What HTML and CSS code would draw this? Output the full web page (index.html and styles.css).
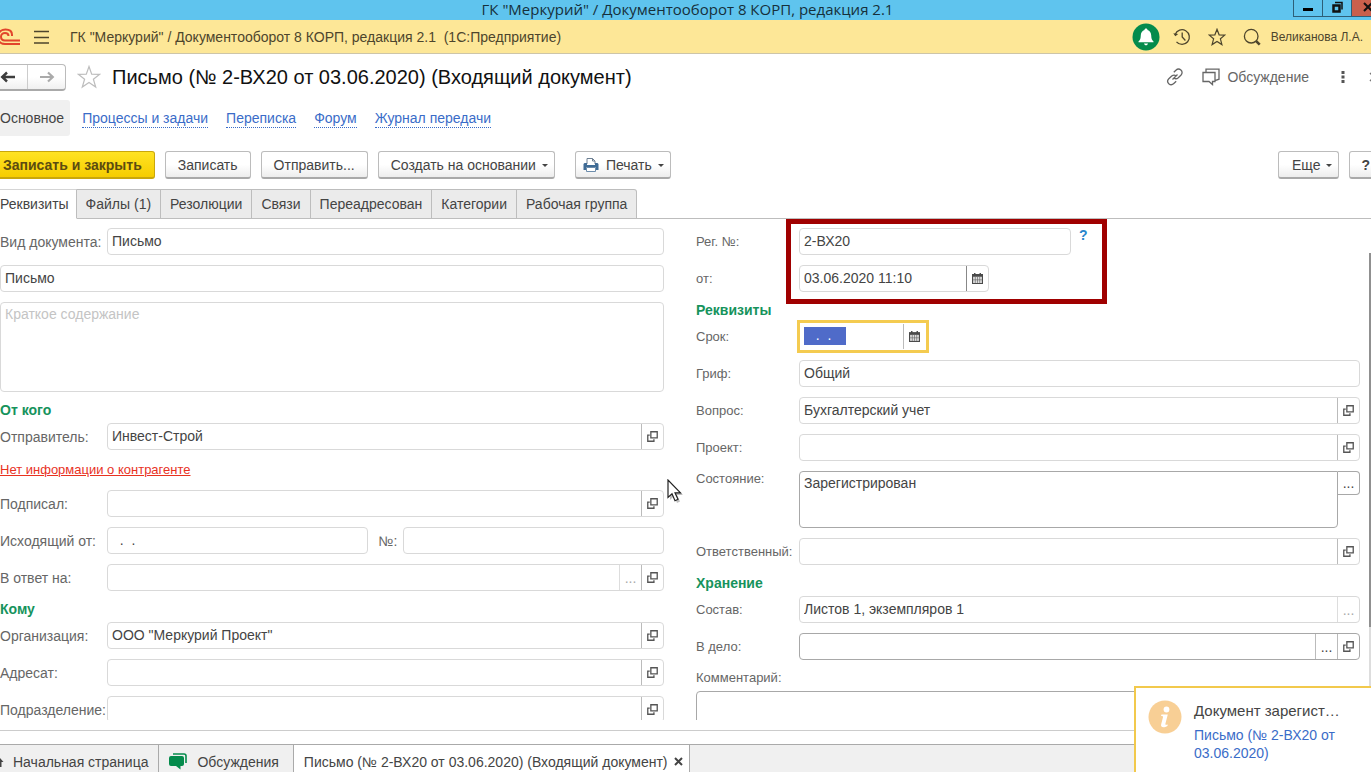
FILE: index.html
```html
<!DOCTYPE html>
<html lang="ru">
<head>
<meta charset="utf-8">
<title>ГК "Меркурий" / Документооборот 8 КОРП, редакция 2.1</title>
<link rel="stylesheet" href="styles.css">
</head>
<body>
<svg class="defs" aria-hidden="true">
  <symbol id="open" viewBox="0 0 10 10"><path d="M3.5.7h5.8v5.6H3.5zM2.5 3.7H.7v5.6h5.6V7.5" fill="none" stroke="#555" stroke-width="1.2"/></symbol>
  <symbol id="cal" viewBox="0 0 10 10"><path d="M0 1h10v9H0z" fill="#4a4a4a"/><path d="M1 3.500h8v5.500H1z" fill="#ddd"/><path d="M3 3.500v5.500M5 3.500v5.500M7 3.500v5.500M1 6.200h8" stroke="#666" stroke-width=".6"/><path d="M2.500 0v2M7.500 0v2" stroke="#4a4a4a" stroke-width="1.300"/></symbol>
</svg>

<header class="titlebar">
  <span class="titlebar-text">ГК "Меркурий" / Документооборот 8 КОРП, редакция 2.1</span>
  <div class="window-buttons">
    <button class="win" aria-label="Свернуть"><svg width="12" height="14"><path d="M1 7h10v3H1z"/></svg></button>
    <button class="win" aria-label="Развернуть"><svg width="12" height="14" fill="none" stroke="#111"><path d="M2.500 4.500h6v6h-6z" stroke-width="2.500"/><path d="M4 1.500h7v7" stroke-width="1.500"/></svg></button>
    <button class="win win-close" aria-label="Закрыть окно"><svg width="12" height="14"><path d="M4 2l8 8M12 2l-8 8" stroke="#111" stroke-width="2"/></svg></button>
  </div>
</header>

<div class="appbar">
  <svg class="logo" width="21" height="18" viewBox="0 0 21 18" fill="none" stroke="#e2452c" stroke-width="2"><path d="M12 8V6.800C12 3.500 9.500 1.500 5.500 1.500 1 1.500-2 4.500-2 9s3 7 7 7H20"/><path d="M8.500 8c0-2-1.300-3-3.500-3S1 6.500 1 8.800s1.800 3.700 4 3.700H20"/></svg>
  <button class="plain" aria-label="Меню"><svg width="16" height="14" stroke="#4d452c" stroke-width="1.400"><path d="M0 1.500h15M0 7.500h15M0 13h15"/></svg></button>
  <span class="app-name">ГК "Меркурий" / Документооборот 8 КОРП, редакция 2.1&nbsp; (1С:Предприятие)</span>
  <div class="app-tools">
    <button class="plain" aria-label="Уведомления"><svg width="28" height="28" viewBox="0 0 28 28"><circle cx="14" cy="14" r="13.500" fill="#048b4c"/><path d="M14 5.500c.9 0 1.500.6 1.500 1.400 2.300.7 3.600 2.600 3.700 5.300.1 3.200.5 4.600 2.300 6.300v.8h-15v-.8c1.800-1.700 2.200-3.100 2.300-6.300.1-2.700 1.400-4.600 3.700-5.300 0-.8.6-1.400 1.500-1.400zM12 20.500h4c-.3 1.200-1 1.800-2 1.800s-1.700-.6-2-1.800z" fill="#fff"/></svg></button>
    <button class="plain" aria-label="История"><svg width="18" height="18" viewBox="0 0 18 18" fill="none" stroke="#4d452c" stroke-width="1.300"><path d="M2.200 6.500A7.300 7.300 0 1 1 3.500 13.800M9.200 4.500V9l3.200 3.500"/><path d="M.3 5.200l2 3.100 2.900-2.400z" fill="#4d452c" stroke="none"/></svg></button>
    <button class="plain" aria-label="Избранное"><svg width="18" height="18" viewBox="0 0 18 18" fill="none" stroke="#4d452c" stroke-width="1.200"><path d="M9 1.300l2.100 5.500 5.700.3-4.400 3.700 1.500 5.800L9 13.400l-4.900 3.200 1.500-5.800L1.200 7.100l5.700-.3z"/></svg></button>
    <button class="plain" aria-label="Поиск"><svg width="18" height="18" viewBox="0 0 18 18" fill="none" stroke="#4d452c" stroke-width="1.300"><circle cx="8.200" cy="8.200" r="6.800"/><path d="M13.200 13.200l3.500 3.500" stroke-width="2.600"/></svg></button>
    <span class="user">Великанова Л.А.</span>
  </div>
</div>

<div class="docbar">
  <div class="history">
    <button aria-label="Назад"><svg width="16" height="12"><path d="M15 6H3M7 1.500L2.200 6 7 10.500" fill="none" stroke="#3d3d3d" stroke-width="2.400"/></svg></button>
    <button aria-label="Вперёд"><svg width="16" height="12"><path d="M1 6h12M9 1.500L13.800 6 9 10.500" fill="none" stroke="#aaa" stroke-width="2.200"/></svg></button>
  </div>
  <button class="plain" aria-label="В избранное"><svg width="24" height="24" viewBox="0 0 24 24" fill="none" stroke="#bdbdbd" stroke-width="1.200"><path d="M12 1.500l2.700 7.600 8 .2-6.300 4.900 2.300 7.800L12 17.500 5.300 22l2.300-7.800L1.300 9.300l8-.2z"/></svg></button>
  <h1>Письмо (№ 2-ВХ20 от 03.06.2020) (Входящий документ)</h1>
  <div class="doc-tools">
    <button class="plain" aria-label="Ссылка"><svg width="18" height="18" viewBox="0 0 18 18" fill="none" stroke="#666" stroke-width="1.300"><path d="M7.800 4.300l2.100-2.100c1.500-1.400 3.500-1.500 5-.2 1.600 1.400 1.500 3.600.2 5l-2.800 2.700c-1.400 1.200-3 1.300-4.400.3M10.200 13.200l-2.400 2.300c-1.500 1.500-3.400 1.600-5 .2-1.500-1.500-1.300-3.600 0-4.900l2.900-2.700c1.400-1.200 3-1.300 4.400-.3M6.500 11.500l5-5"/></svg></button>
    <button class="plain discuss"><svg width="18" height="18" viewBox="0 0 18 18" fill="none" stroke="#666" stroke-width="1.300"><path d="M1 4.500h12v9h-2.500v3l-3.500-3H1zM4 4.500V1.200h13v10l-4 1.500"/></svg>Обсуждение</button>
    <button class="plain" aria-label="Действия"><svg width="4" height="14" fill="#555"><path d="M.5 1h3v3h-3zM.5 5.500h3v3h-3zM.5 10h3v3h-3z"/></svg></button>
    <button class="plain close-doc" aria-label="Закрыть"><svg width="10" height="10"><path d="M1 1l8 8M9 1L1 9" stroke="#777" stroke-width="1.500"/></svg></button>
  </div>
</div>

<nav class="sections">
  <span class="current">Основное</span>
  <a href="#">Процессы и задачи</a>
  <a href="#">Переписка</a>
  <a href="#">Форум</a>
  <a href="#">Журнал передачи</a>
</nav>

<div class="commands">
  <button class="btn primary">Записать и закрыть</button>
  <button class="btn">Записать</button>
  <button class="btn">Отправить...</button>
  <button class="btn">Создать на основании<i class="caret"></i></button>
  <button class="btn print"><svg width="16" height="16" viewBox="0 0 16 16"><path d="M4 7V1.500h5.500L12 4v3" fill="#fff" stroke="#6c7f92"/><path d="M9.500 1.500V4H12" fill="none" stroke="#6c7f92"/><path d="M1.500 6H4v2h8V6h2.500l1 1v6H13v-2.500H3V13H.5V7z" fill="#3f6b95"/><path d="M3.500 10.500h9v4h-9z" fill="#fff" stroke="#6c8cab"/></svg>Печать<i class="caret"></i></button>
  <button class="btn more">Еще<i class="caret"></i></button>
  <button class="btn help">?</button>
</div>

<div class="tabs" role="tablist">
  <button role="tab" class="active" aria-selected="true">Реквизиты</button>
  <button role="tab">Файлы (1)</button>
  <button role="tab">Резолюции</button>
  <button role="tab">Связи</button>
  <button role="tab">Переадресован</button>
  <button role="tab">Категории</button>
  <button role="tab">Рабочая группа</button>
</div>

<main class="form">
  <div class="column left">
    <div class="group">
      <div class="row"><label for="kind">Вид документа:</label><div class="field"><input id="kind" value="Письмо"></div></div>
      <div class="field"><input aria-label="Заголовок" value="Письмо"></div>
      <textarea class="summary" aria-label="Краткое содержание" placeholder="Краткое содержание"></textarea>
    </div>
    <h2>От кого</h2>
    <div class="group">
      <div class="row"><label for="sender">Отправитель:</label><div class="field"><input id="sender" value="Инвест-Строй"><button aria-label="Открыть"><svg><use href="#open"/></svg></button></div></div>
      <a class="warning" href="#">Нет информации о контрагенте</a>
      <div class="row"><label for="signer">Подписал:</label><div class="field"><input id="signer"><button aria-label="Открыть"><svg><use href="#open"/></svg></button></div></div>
      <div class="row"><label for="outdate">Исходящий от:</label><div class="pair"><div class="field"><input id="outdate" value="&nbsp; .&nbsp; ."></div><label for="outnum">№:</label><div class="field"><input id="outnum"></div></div></div>
      <div class="row"><label for="reply">В ответ на:</label><div class="field"><input id="reply"><button class="light" aria-label="Выбрать">...</button><button aria-label="Открыть"><svg><use href="#open"/></svg></button></div></div>
    </div>
    <h2>Кому</h2>
    <div class="group">
      <div class="row"><label for="org">Организация:</label><div class="field"><input id="org" value='ООО "Меркурий Проект"'><button aria-label="Открыть"><svg><use href="#open"/></svg></button></div></div>
      <div class="row"><label for="addr">Адресат:</label><div class="field"><input id="addr"><button aria-label="Открыть"><svg><use href="#open"/></svg></button></div></div>
      <div class="row"><label for="dept">Подразделение:</label><div class="field"><input id="dept"><button aria-label="Открыть"><svg><use href="#open"/></svg></button></div></div>
    </div>
  </div>

  <div class="column right">
    <div class="group registration">
      <div class="row"><label for="regnum">Рег. №:</label><div class="with-hint"><div class="field regnum"><input id="regnum" value="2-ВХ20"></div><a class="hint" href="#">?</a></div></div>
      <div class="row"><label for="regdate">от:</label><div class="field regdate"><input id="regdate" value="03.06.2020 11:10"><button class="strong" aria-label="Календарь"><svg><use href="#cal"/></svg></button></div></div>
      <div class="highlight"></div>
    </div>
    <h2>Реквизиты</h2>
    <div class="group">
      <div class="row"><label for="due">Срок:</label><div class="field due"><input id="due" value="&nbsp; .&nbsp; ."><button aria-label="Календарь"><svg><use href="#cal"/></svg></button></div></div>
      <div class="row"><label for="stamp">Гриф:</label><div class="field"><input id="stamp" value="Общий"></div></div>
      <div class="row"><label for="topic">Вопрос:</label><div class="field"><input id="topic" value="Бухгалтерский учет"><button aria-label="Открыть"><svg><use href="#open"/></svg></button></div></div>
      <div class="row"><label for="project">Проект:</label><div class="field"><input id="project"><button aria-label="Открыть"><svg><use href="#open"/></svg></button></div></div>
      <div class="row state"><label for="state">Состояние:</label><div class="state-box"><textarea id="state">Зарегистрирован</textarea><button aria-label="Выбрать">...</button></div></div>
      <div class="row"><label for="resp">Ответственный:</label><div class="field"><input id="resp"><button aria-label="Открыть"><svg><use href="#open"/></svg></button></div></div>
    </div>
    <h2>Хранение</h2>
    <div class="group">
      <div class="row"><label for="content">Состав:</label><div class="field"><input id="content" value="Листов 1, экземпляров 1"><button class="light" aria-label="Выбрать">...</button></div></div>
      <div class="row"><label for="file">В дело:</label><div class="field dark"><input id="file"><button aria-label="Выбрать">...</button><button aria-label="Открыть"><svg><use href="#open"/></svg></button></div></div>
    </div>
    <label class="comment-label" for="comment">Комментарий:</label>
    <textarea id="comment" class="comment"></textarea>
  </div>
  <div class="scrollbar"><div class="thumb"></div></div>
</main>

<footer class="taskbar">
  <button class="task home"><svg width="5" height="12"><path d="M-3 6L0 2l3.500 4H1.500v5H-1" fill="#444"/></svg>Начальная страница</button>
  <button class="task talks"><svg width="18" height="17" viewBox="0 0 18 17"><path d="M4 1h11q2 0 2 2v7" fill="none" stroke="#048b4c" stroke-width="1.600"/><path d="M2 3h11q2 0 2 2v6q0 2-2 2h-1.500v3.500L7 13H2q-2 0-2-2V5q0-2 2-2z" fill="#048b4c"/></svg>Обсуждения</button>
  <button class="task active">Письмо (№ 2-ВХ20 от 03.06.2020) (Входящий документ)<svg width="9" height="9"><path d="M1 1l7 7M8 1L1 8" stroke="#444" stroke-width="2"/></svg></button>
</footer>

<aside class="toast">
  <svg width="34" height="34" viewBox="0 0 34 34"><circle cx="17" cy="17" r="16.500" fill="#f8cf95"/><circle cx="18.500" cy="9.500" r="2.900" fill="#fff"/><path d="M13.500 14.500h6.300l-2.400 9.300c-.2 1 .6 1.300 2.400.6l-.4 1.500c-3 2-7 2-6.300-1.300l1.900-7.400c.2-.9-.3-1.200-2-1.200z" fill="#fff"/></svg>
  <div>
    <div class="toast-title">Документ зарегист…</div>
    <a href="#">Письмо (№ 2-ВХ20 от 03.06.2020)</a>
  </div>
</aside>

<svg class="cursor" width="18" height="26" viewBox="0 0 18 26"><path d="M3 3v18l4-4 3 7 3-1.500-3-6.500h6z" fill="#000" opacity=".25"/><path d="M1 1v17.500l4-3.700 3 6.900 3-1.400-3-6.500h5.500z" fill="#fff" stroke="#222" stroke-width="1.200"/></svg>
</body>
</html>
```
FILE: styles.css
```css
* { box-sizing: border-box; }

body {
  margin: 0;
  height: 100vh;
  display: flex;
  flex-direction: column;
  position: relative;
  overflow: hidden;
  background: #fff;
  color: #444;
  font: 14px/20px "Liberation Sans", Arial, sans-serif;
}

button, input, textarea { font: inherit; color: inherit; margin: 0; outline: none; }
button { padding: 0; background: none; border: 0; white-space: nowrap; }
a { color: #3a6cc8; }
svg { flex: none; }
.defs { position: absolute; width: 0; height: 0; }
.plain { display: flex; align-items: center; }

/* window title */
.titlebar {
  flex: none;
  height: 20px;
  display: flex;
  justify-content: center;
  background: #5fc4ee;
  position: relative;
}
.titlebar-text { font: 15px/18px "Open Sans", "Noto Sans", sans-serif; color: #16303b; padding-left: 4px; }
.window-buttons { position: absolute; right: 0; top: 0; display: flex; width: 78px; height: 17px; overflow: hidden; }
.win { flex: none; width: 29px; height: 17px; border: 1px solid #2d5f78; border-top: 0; border-right: 0; display: flex; align-items: center; justify-content: center; }
.win-close { background: #c9604c; }

/* application bar */
.appbar {
  flex: none;
  height: 34px;
  display: flex;
  align-items: center;
  background: #fde797;
  border-bottom: 1px solid #cdc5a8;
  color: #4d452c;
}
.logo { margin-right: 13px; }
.app-name { margin-left: 20px; }
.app-tools { margin-left: auto; display: flex; align-items: center; gap: 17px; padding-right: 8px; }
.app-tools .plain:first-child { margin-right: -4px; }
.user { font-size: 12px; margin-left: -7px; }

/* document header */
.docbar { flex: none; height: 46px; display: flex; align-items: center; }
.history {
  display: flex;
  height: 27px;
  border: 1px solid #bbb;
  border-left: 0;
  border-bottom: 2px solid #aaa;
  border-radius: 0 4px 4px 0;
  background: linear-gradient(#fff 50%, #f0f0f0);
  margin-right: 11px;
}
.history button { width: 37px; display: flex; align-items: center; justify-content: center; }
.history button:first-child { width: 28px; border-right: 1px solid #ccc; justify-content: flex-start; }
h1 { margin: 0 0 0 11px; font-size: 20px; line-height: 24px; font-weight: 400; color: #111; }
.doc-tools { margin-left: auto; display: flex; align-items: center; gap: 18px; color: #666; }
.discuss { gap: 7px; }
.doc-tools .discuss + .plain { margin-left: 14px; }
.doc-tools .close-doc { width: 8px; overflow: hidden; margin: 0 -6px 0 6px; }

/* section links */
.sections { flex: none; height: 36px; display: flex; align-items: center; gap: 18px; }
.sections .current { background: #f0f0f0; line-height: 36px; padding-right: 6px; margin-right: -6px; border-radius: 0 3px 3px 0; }
.sections a { text-decoration: none; line-height: 17px; padding-top: 2px; border-bottom: 1px dotted #3a6cc8; }

/* commands */
.commands { flex: none; display: flex; padding-top: 15px; gap: 10px; }
.btn {
  height: 28px;
  padding: 0 12px;
  display: flex;
  align-items: center;
  background: linear-gradient(#fff 50%, #ededed);
  border: 1px solid #bcbcbc;
  border-bottom: 2px solid #a9a9a9;
  border-radius: 3px;
}
.primary { padding-left: 3px; font-weight: 700; color: #5c4c10; background: linear-gradient(#ffe324, #f6cd00); border-color: #c9a70c; border-left: 0; border-radius: 0 3px 3px 0; }
.caret { margin: 1px -6px 0 6px; border: 3px solid transparent; border-top-color: #444; border-bottom: 0; }
.print { margin-left: 10px; padding-left: 7px; }
.print svg { margin-right: 7px; }
.more { margin-left: auto; padding-left: 13px; }
.help { padding: 0 11px; margin-right: -11px; font-weight: 700; }

/* form tabs */
.tabs { flex: none; display: flex; margin-top: 10px; height: 30px; border-bottom: 1px solid #bdbdbd; }
.tabs button { height: 30px; padding: 0 9px; background: #ebebeb; border: 1px solid #bdbdbd; border-left-width: 0; }
.tabs .active { background: #fff; padding: 0 7px 0 0; border-bottom-color: #fff; border-top-color: #d5d5d5; }
.tabs button:last-child { border-radius: 0 3px 0 0; }

/* form */
.form {
  flex: 1;
  min-height: 0;
  display: grid;
  grid-template-columns: 1fr 1fr;
  gap: 32px;
  padding: 9px 11px 0 0;
  margin-bottom: 10px;
  overflow: hidden;
  position: relative;
}
.column { min-width: 0; }
.group { display: flex; flex-direction: column; gap: 10px; position: relative; }
.row { display: grid; grid-template-columns: 107px 1fr; align-items: center; }
.right .row { grid-template-columns: 103px 1fr; }
label { color: #666; white-space: nowrap; }
.right label { font-size: 13px; }
h2 { margin: 0; padding: 8px 0 3px; font-size: 14px; line-height: 20px; color: #16935c; }

.field { height: 27px; min-width: 0; display: flex; border: 1px solid #d9d9d9; border-radius: 4px; background: #fff; overflow: hidden; }
.field input { flex: 1; min-width: 0; width: 0; border: 0; padding: 0 4px 2px; background: none; }
.field button { width: 22px; border-left: 1px solid #bbb; display: flex; align-items: center; justify-content: center; }
.field button svg { width: 11px; height: 11px; }
.field .light { border-left-color: #ddd; color: #aaa; }
.field .strong { border-left-color: #888; }
.dark { border-color: #a8a8a8; }
textarea { display: block; width: 100%; resize: none; overflow: hidden; border: 1px solid #d9d9d9; border-radius: 4px; padding: 1px 4px; background: #fff; }
textarea::placeholder { color: #c4c4c4; opacity: 1; }
.summary { height: 90px; }
.warning { color: #e8321f; font-size: 13px; line-height: 20px; align-self: flex-start; }
.pair { display: grid; grid-template-columns: 1fr auto 1fr; align-items: center; }
.pair label { margin: 0 6px 0 11px; }

.with-hint { display: flex; align-items: flex-start; gap: 8px; }
.regnum { width: 272px; }
.hint { color: #2a86cc; font-weight: 700; line-height: 14px; text-decoration: none; }
.regdate { width: 190px; }
.highlight { position: absolute; left: 90px; top: -9px; width: 321px; height: 85px; border: 5px solid #a00000; }
.due { width: 126px; border-color: #fff; border-radius: 0; margin-left: 1px; outline: 3px solid #f4cb50; }
.due input { flex: none; width: 42px; height: 18px; margin: 3px auto 0 3px; background: #4f6bc9; color: #fff; }

.state { align-items: start; }
.state label { line-height: 16px; }
.state-box { display: flex; align-items: flex-start; }
.state-box textarea { flex: 1; height: 57px; border-color: #a8a8a8; border-top-right-radius: 0; }
.state-box button { width: 22px; height: 24px; border: 1px solid #a8a8a8; border-left: 0; border-radius: 0 4px 4px 0; }
.comment-label { display: block; padding: 8px 0 3px; }
.comment { height: 60px; border-color: #a8a8a8; }

.scrollbar { position: absolute; right: 0; top: 34px; bottom: 0; width: 2px; background: #ddd; }
.thumb { height: 80%; background: #909090; }

/* open windows */
.taskbar { flex: none; height: 42px; display: flex; border-top: 1px solid #ccc; padding-top: 13px; background: linear-gradient(#fff 13px, #f0f0f0 13px); }
.task { border-top: 1px solid #aaa; border-right: 1px solid #aaa; padding: 6px 10px 0 0; display: flex; align-items: center; }
.taskbar::after { content: ""; flex: 1; border-top: 1px solid #aaa; }
.home svg { margin-right: 8px; }
.talks { padding: 6px 14px 0 10px; }
.talks svg { margin-right: 10px; }
.task.active { background: #fff; padding: 6px 6px 0 10px; }
.task.active svg { margin-left: 6px; }

/* notification */
.toast {
  position: absolute;
  right: 0;
  bottom: 0;
  width: 237px;
  height: 86px;
  display: flex;
  gap: 12px;
  padding: 12px 24px 0 12px;
  background: #fff;
  border: 2px solid #f2c94c;
  border-right: 0;
  border-bottom: 0;
}
.toast-title { font-size: 15px; line-height: 22px; white-space: nowrap; }
.toast a { display: block; line-height: 18px; margin-top: 4px; text-decoration: none; }

.cursor { position: absolute; left: 667px; top: 479px; }
```
